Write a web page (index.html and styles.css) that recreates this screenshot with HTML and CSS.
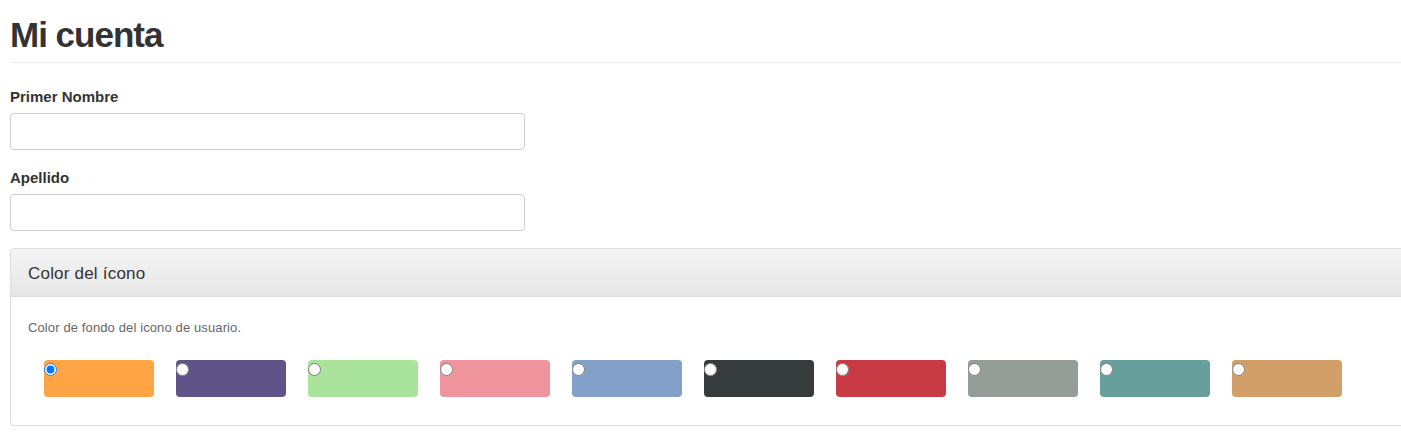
FILE: index.html
```html
<!DOCTYPE html>
<html lang="es">
<head>
    <meta charset="UTF-8">
    <meta name="viewport" content="width=device-width, initial-scale=1.0">
    <title>Mi cuenta</title>
    <link rel="stylesheet" href="styles.css">
</head>
<body>

    <div class="page">
        <h1 class="page-header">Mi cuenta</h1>

        <form class="account-form">
            <div class="form-group">
                <label for="firstName">Primer Nombre</label>
                <input type="text" id="firstName" class="form-control">
            </div>

            <div class="form-group">
                <label for="lastName">Apellido</label>
                <input type="text" id="lastName" class="form-control">
            </div>

            <div class="panel">
                <div class="panel-heading">Color del ícono</div>
                <div class="panel-body">
                    <p class="help-text">Color de fondo del icono de usuario.</p>

                    <div class="swatches">
                        <label class="swatch" style="background-color: #ffa444;"><input type="radio" name="iconColor" value="orange" checked></label>
                        <label class="swatch" style="background-color: #5f5388;"><input type="radio" name="iconColor" value="purple"></label>
                        <label class="swatch" style="background-color: #aae39b;"><input type="radio" name="iconColor" value="green"></label>
                        <label class="swatch" style="background-color: #ef949c;"><input type="radio" name="iconColor" value="pink"></label>
                        <label class="swatch" style="background-color: #83a1c8;"><input type="radio" name="iconColor" value="blue"></label>
                        <label class="swatch" style="background-color: #363b3c;"><input type="radio" name="iconColor" value="dark"></label>
                        <label class="swatch" style="background-color: #c83a44;"><input type="radio" name="iconColor" value="red"></label>
                        <label class="swatch" style="background-color: #949d97;"><input type="radio" name="iconColor" value="gray"></label>
                        <label class="swatch" style="background-color: #679f9c;"><input type="radio" name="iconColor" value="teal"></label>
                        <label class="swatch" style="background-color: #d39f68;"><input type="radio" name="iconColor" value="tan"></label>
                    </div>
                </div>
            </div>
        </form>
    </div>

</body>
</html>
```

FILE: styles.css
```css
body {
    font-family: "Liberation Sans", Arial, sans-serif;
    font-size: 14px;
    color: #333;
    margin: 0;
    overflow: hidden;
}

.page {
    width: 1420px;
    padding-left: 10px;
}

.page-header {
    font-size: 35px;
    font-weight: bold;
    letter-spacing: -1px;
    line-height: 40px;
    margin: 15px 0 0;
    padding-bottom: 7px;
    border-bottom: 1px solid #eee;
}

.account-form {
    padding-top: 24px;
}

.form-group {
    margin-bottom: 18px;
}

.form-group label {
    display: block;
    font-weight: bold;
    font-size: 15px;
    line-height: 20px;
    margin-bottom: 6px;
}

.form-control {
    display: block;
    box-sizing: border-box;
    width: 515px;
    height: 37px;
    padding: 6px 12px;
    border: 1px solid #ccc;
    border-radius: 4px;
    font-size: 14px;
}

.panel {
    margin-top: -1px;
    border: 1px solid #ddd;
    border-radius: 4px;
    box-shadow: 0 1px 1px rgba(0, 0, 0, 0.05);
}

.panel-heading {
    height: 45px;
    line-height: 45px;
    padding: 2px 17px 0;
    font-size: 17px;
    letter-spacing: 0.2px;
    color: #333;
    background: linear-gradient(#f4f4f4, #e6e6e6);
    border-bottom: 1px solid #ddd;
    border-radius: 3px 3px 0 0;
}

.panel-body {
    padding: 22px 17px 28px;
}

.help-text {
    margin: 0 0 23px;
    font-size: 13px;
    letter-spacing: 0.12px;
    line-height: 18px;
    color: #666;
}

.swatches {
    display: flex;
    gap: 22px;
    padding-left: 16px;
}

.swatch {
    display: block;
    width: 110px;
    height: 37px;
    border-radius: 4px;
}

.swatch input {
    display: block;
    width: 13px;
    height: 13px;
    margin: 3px 0 0 0;
}
```
